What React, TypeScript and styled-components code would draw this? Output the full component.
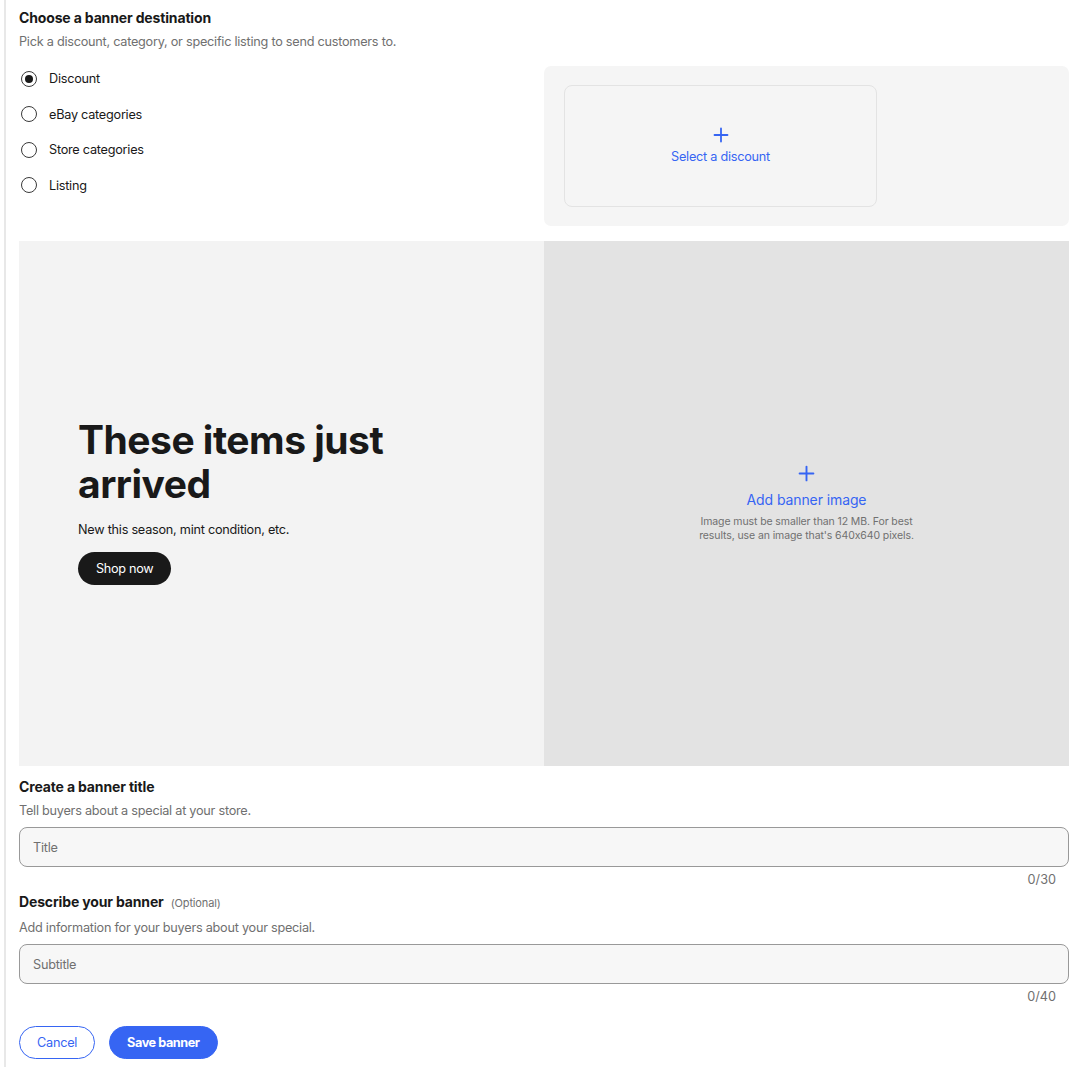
import React from "react";
import styled, { createGlobalStyle } from "styled-components";

const Global = createGlobalStyle`
  html, body { margin: 0; padding: 0; background: #fff; }
  body { font-family: Inter, "Open Sans", Arial, sans-serif; color: #191919; -webkit-font-smoothing: antialiased; }
  * { box-sizing: border-box; }
`;

const Frame = styled.div`
  margin-left: 4px;
  border-left: 2px solid #e8e8e8;
  padding: 8px 11px 8px 13px;
  min-height: 1067px;
`;

const SectionTitle = styled.h2`
  margin: 0;
  font-size: 14px;
  line-height: 20px;
  font-weight: 700;
  letter-spacing: -0.15px;
  display: flex;
  align-items: baseline;
  gap: 7px;
`;

const Optional = styled.span`
  font-size: 11px;
  font-weight: 400;
  color: #707070;
`;

const Hint = styled.p<{ $gap?: number }>`
  margin: ${(p) => p.$gap ?? 4}px 0 0;
  font-size: 12.7px;
  line-height: 20px;
  color: #707070;
  letter-spacing: -0.25px;
`;

const DestGrid = styled.div`
  margin-top: 14px;
  display: grid;
  grid-template-columns: 1fr 1fr;
`;

const RadioList = styled.div`
  display: flex;
  flex-direction: column;
  gap: 11.5px;
  padding-top: 0.5px;
`;

const RadioRow = styled.label`
  display: flex;
  align-items: center;
  height: 24px;
  gap: 12px;
  font-size: 12.7px;
  letter-spacing: -0.25px;
  cursor: pointer;
`;

const RadioCircle = styled.span<{ $on?: boolean }>`
  width: 16px;
  height: 16px;
  margin-left: 2px;
  border-radius: 50%;
  border: 1.5px solid #3a3a3a;
  display: flex;
  align-items: center;
  justify-content: center;
  &::after {
    content: "";
    width: 8px;
    height: 8px;
    border-radius: 50%;
    background: #191919;
    display: ${(p) => (p.$on ? "block" : "none")};
  }
`;

const DestPanel = styled.div`
  background: #f5f5f5;
  border-radius: 7px;
  height: 160px;
  padding: 19px 20px;
`;

const DiscountCard = styled.button`
  width: 313px;
  height: 122px;
  border: 1px solid #e3e3e3;
  border-radius: 8px;
  background: #f5f5f5;
  display: flex;
  flex-direction: column;
  align-items: center;
  justify-content: center;
  gap: 6px;
  color: #3665f3;
  font-family: inherit;
  font-size: 12.7px;
  letter-spacing: -0.25px;
  cursor: pointer;
  padding: 0 0 2px;
`;

const Banner = styled.div`
  margin-top: 15px;
  display: grid;
  grid-template-columns: 1fr 1fr;
  height: 525px;
`;

const BannerText = styled.div`
  background: #f3f3f3;
  padding: 0 59px 4px;
  display: flex;
  flex-direction: column;
  justify-content: center;
  align-items: flex-start;
`;

const BannerHeading = styled.h1`
  margin: 0;
  font-size: 39px;
  line-height: 44px;
  font-weight: 700;
  letter-spacing: -0.5px;
  max-width: 330px;
`;

const BannerSub = styled.p`
  margin: 14px 0 0;
  font-size: 12.7px;
  line-height: 20px;
  letter-spacing: -0.25px;
`;

const ShopButton = styled.button`
  margin-top: 12px;
  height: 33px;
  padding: 0 18px;
  border: none;
  border-radius: 17px;
  background: #191919;
  color: #fff;
  font-family: inherit;
  font-size: 12.7px;
  letter-spacing: -0.3px;
`;

const ImageDrop = styled.div`
  background: #e3e3e3;
  display: flex;
  flex-direction: column;
  align-items: center;
  justify-content: center;
  text-align: center;
`;

const AddImage = styled.span`
  margin-top: 8px;
  color: #3665f3;
  font-size: 14px;
  line-height: 20px;
  letter-spacing: -0.1px;
`;

const ImageNote = styled.p`
  margin: 5px 0 0;
  font-size: 10.5px;
  line-height: 14px;
  color: #707070;
  max-width: 230px;
  letter-spacing: -0.1px;
`;

const FieldTitle = styled(SectionTitle)<{ $gap: number }>`
  margin-top: ${(p) => p.$gap}px;
`;

const Input = styled.input`
  margin-top: 6px;
  width: 100%;
  height: 40px;
  border: 1px solid #999;
  border-radius: 8px;
  background: #f7f7f7;
  padding: 0 13px;
  font-family: inherit;
  font-size: 12.7px;
  letter-spacing: -0.25px;
  color: #191919;
  &::placeholder { color: #707070; }
`;

const Counter = styled.div`
  margin-top: 5px;
  text-align: right;
  padding-right: 13px;
  font-size: 12.7px;
  line-height: 16px;
  color: #707070;
`;

const Actions = styled.div`
  margin-top: 21px;
  display: flex;
  gap: 14px;
`;

const Btn = styled.button<{ $primary?: boolean }>`
  height: 33px;
  padding: 0 17px;
  border-radius: 17px;
  font-family: inherit;
  font-size: 12.7px;
  letter-spacing: ${(p) => (p.$primary ? "-0.45px" : "-0.25px")};
  border: 1px solid #3665f3;
  background: ${(p) => (p.$primary ? "#3665f3" : "#fff")};
  color: ${(p) => (p.$primary ? "#fff" : "#3665f3")};
  font-weight: ${(p) => (p.$primary ? 700 : 400)};
  cursor: pointer;
`;

const Plus = ({ size }: { size: number }) => (
  <svg width={size} height={size} viewBox="0 0 16 16" fill="none">
    <path d="M8 1.5v13M1.5 8h13" stroke="#3665f3" strokeWidth="1.8" strokeLinecap="round" />
  </svg>
);

const options = ["Discount", "eBay categories", "Store categories", "Listing"];

export default function App() {
  return (
    <>
      <Global />
      <Frame>
        <SectionTitle>Choose a banner destination</SectionTitle>
        <Hint>Pick a discount, category, or specific listing to send customers to.</Hint>
        <DestGrid>
          <RadioList>
            {options.map((o, i) => (
              <RadioRow key={o}>
                <RadioCircle $on={i === 0} />
                {o}
              </RadioRow>
            ))}
          </RadioList>
          <DestPanel>
            <DiscountCard>
              <Plus size={16} />
              Select a discount
            </DiscountCard>
          </DestPanel>
        </DestGrid>

        <Banner>
          <BannerText>
            <BannerHeading>These items just arrived</BannerHeading>
            <BannerSub>New this season, mint condition, etc.</BannerSub>
            <ShopButton>Shop now</ShopButton>
          </BannerText>
          <ImageDrop>
            <Plus size={17} />
            <AddImage>Add banner image</AddImage>
            <ImageNote>
              Image must be smaller than 12 MB. For best results, use an image that's 640x640 pixels.
            </ImageNote>
          </ImageDrop>
        </Banner>

        <FieldTitle $gap={11}>Create a banner title</FieldTitle>
        <Hint>Tell buyers about a special at your store.</Hint>
        <Input placeholder="Title" />
        <Counter>0/30</Counter>

        <FieldTitle $gap={4}>
          Describe your banner <Optional>(Optional)</Optional>
        </FieldTitle>
        <Hint $gap={5}>Add information for your buyers about your special.</Hint>
        <Input placeholder="Subtitle" />
        <Counter>0/40</Counter>

        <Actions>
          <Btn>Cancel</Btn>
          <Btn $primary>Save banner</Btn>
        </Actions>
      </Frame>
    </>
  );
}
